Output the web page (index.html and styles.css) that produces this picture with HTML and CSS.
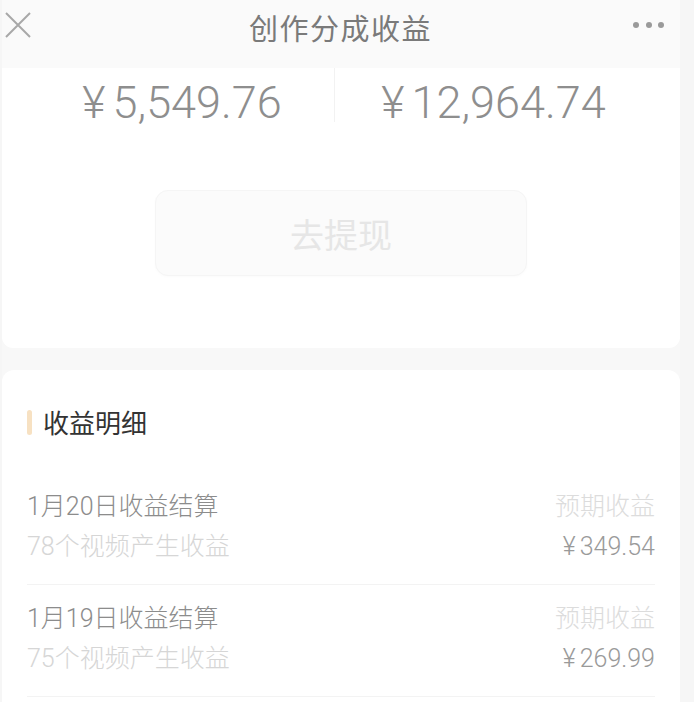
FILE: index.html
```html
<!DOCTYPE html>
<html lang="zh-CN">
<head>
<meta charset="utf-8">
<title>创作分成收益</title>
<link rel="stylesheet" href="styles.css">
</head>
<body>
<div class="page">
  <header class="topbar">
    <div class="nav-left">
      <svg class="icon-close" width="26" height="26" viewBox="0 0 26 26" aria-hidden="true">
        <path d="M1 1 L25 25 M25 1 L1 25" stroke="#a8a8a8" stroke-width="2" fill="none"/>
      </svg>
    </div>
    <h1 class="title">创作分成收益</h1>
    <div class="nav-right">
      <span class="dot"></span><span class="dot"></span><span class="dot"></span>
    </div>
  </header>

  <section class="card summary">
    <div class="amounts">
      <div class="amount amount-left"><span class="yen">¥</span>5,549.76</div>
      <div class="divider"></div>
      <div class="amount amount-right"><span class="yen">¥</span>12,964.74</div>
    </div>
    <div class="btn-wrap">
      <button class="withdraw">去提现</button>
    </div>
  </section>

  <section class="card detail">
    <h2 class="section-title"><span class="accent"></span>收益明细</h2>
    <ul class="rows">
      <li class="row">
        <div class="col">
          <div class="line primary">1月20日收益结算</div>
          <div class="line secondary">78个视频产生收益</div>
        </div>
        <div class="col right">
          <div class="line label">预期收益</div>
          <div class="line money"><span class="yen-s">¥</span>349.54</div>
        </div>
      </li>
      <li class="row">
        <div class="col">
          <div class="line primary">1月19日收益结算</div>
          <div class="line secondary">75个视频产生收益</div>
        </div>
        <div class="col right">
          <div class="line label">预期收益</div>
          <div class="line money"><span class="yen-s">¥</span>269.99</div>
        </div>
      </li>
    </ul>
  </section>
</div>
</body>
</html>
```

FILE: styles.css
```css
html, body {
  margin: 0;
  padding: 0;
}
body {
  background: #f6f6f6;
  font-family: Roboto, "Noto Sans CJK SC", "Noto Sans", sans-serif;
  height: 702px;
  overflow: hidden;
}
.page {
  width: 678px;
  margin-left: 2px;
  background: #f8f8f8;
  height: 702px;
  overflow: hidden;
}
.topbar {
  height: 68px;
  background: #fafafa;
  display: grid;
  grid-template-columns: 1fr auto 1fr;
  align-items: start;
  margin-left: -2px;
  width: 680px;
  box-sizing: border-box;
  padding: 0 16px 0 5px;
}
.nav-left {
  padding-top: 12px;
  height: 26px;
}
.icon-close {
  display: block;
}
.title {
  margin: 0;
  font-family: "Noto Sans CJK SC", sans-serif;
  font-weight: 400;
  font-size: 29px;
  line-height: 54px;
  color: #7a7a7a;
  letter-spacing: 1.5px;
  padding-left: 12px;
}
.nav-right {
  display: flex;
  justify-content: flex-end;
  gap: 6.5px;
  padding-top: 22px;
}
.dot {
  width: 6px;
  height: 6px;
  border-radius: 50%;
  background: #9a9a9a;
}
.card {
  background: #fff;
}
.summary {
  height: 280px;
  border-radius: 0 0 11px 11px;
  display: flex;
  flex-direction: column;
}
.amounts {
  display: flex;
  align-items: flex-start;
}
.amount {
  text-align: center;
  font-family: Roboto, sans-serif;
  font-weight: 300;
  font-size: 45px;
  line-height: 45px;
  color: #8e8e8e;
  padding-top: 12px;
  white-space: nowrap;
}
.yen {
  margin-right: 7px;
}
.amount-left {
  width: 332px;
  box-sizing: border-box;
  padding-left: 28px;
}
.amount-right {
  flex: 1;
  padding-right: 28px;
}
.divider {
  width: 1px;
  height: 54px;
  background: #f2f2f2;
}
.btn-wrap {
  display: flex;
  justify-content: center;
  padding-top: 65px;
}
.withdraw {
  width: 372px;
  height: 86px;
  border: 1px solid #f5f5f5;
  border-radius: 13px;
  background: #fbfbfb;
  font-family: "Noto Sans CJK SC", sans-serif;
  font-size: 34px;
  color: #e6e6e6;
  box-shadow: 0 1px 3px rgba(0,0,0,0.02);
}
.detail {
  margin-top: 22px;
  border-radius: 12px 12px 0 0;
  padding: 32px 25px 0 25px;
  height: 300px;
}
.section-title {
  margin: 0;
  display: flex;
  align-items: center;
  gap: 11px;
  font-family: "Noto Sans CJK SC", sans-serif;
  font-weight: 400;
  font-size: 26px;
  line-height: 40px;
  color: #333;
}
.accent {
  width: 5px;
  height: 25px;
  border-radius: 3px;
  background: #f7e1c2;
}
.rows {
  list-style: none;
  margin: 31px 0 0 0;
  padding: 0;
}
.row {
  display: flex;
  justify-content: space-between;
  padding: 14px 0 17px 0;
  border-bottom: 1px solid #f3f3f3;
}
.col.right {
  text-align: right;
}
.line {
  font-size: 25px;
  line-height: 40px;
  white-space: nowrap;
  font-weight: 300;
}
.primary {
  color: #8c8c8c;
}
.secondary {
  color: #d6d6d6;
}
.label {
  color: #dcdcdc;
}
.money {
  color: #9a9a9a;
}
.yen-s {
  margin-right: 4px;
}
```
